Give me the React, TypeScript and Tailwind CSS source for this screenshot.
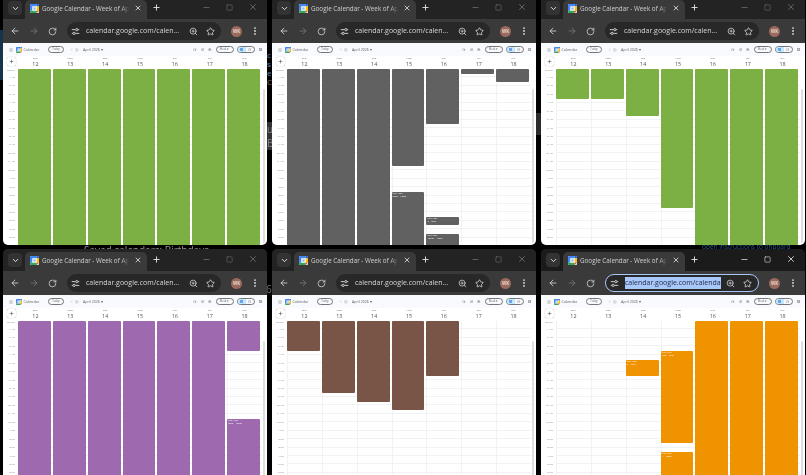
import { ArrowLeft, ArrowRight, ChevronDown, ChevronLeft, ChevronRight, Menu, Minus, MoreVertical, Plus, RotateCw, Search, Settings, Square, Star, X, ZoomIn, CircleHelp, CalendarDays, CheckCircle2, LayoutGrid } from "lucide-react";

type Ev = { col: number; top: number; bottom?: number; label?: string };

const FULL = (cols: number[]): Ev[] => cols.map((col) => ({ col, top: 0 }));

const windows: { color: string; events: Ev[]; active?: boolean }[] = [
  { color: "#7cb044", events: FULL([0, 1, 2, 3, 4, 5, 6]) },
  {
    color: "#616161",
    events: [
      ...FULL([0, 1, 2]),
      { col: 3, top: 0, bottom: 97 },
      { col: 3, top: 123, label: "5pm – 12am" },
      { col: 4, top: 0, bottom: 55 },
      { col: 4, top: 148, bottom: 156, label: "7 – 8pm" },
      { col: 4, top: 165, label: "10pm – 12am" },
      { col: 5, top: 0, bottom: 5 },
      { col: 6, top: 0, bottom: 13 },
    ],
  },
  {
    color: "#7cb044",
    events: [
      { col: 0, top: 0, bottom: 30 },
      { col: 1, top: 0, bottom: 30 },
      { col: 2, top: 0, bottom: 47 },
      { col: 3, top: 0, bottom: 139 },
      ...FULL([4, 5, 6]),
    ],
  },
  {
    color: "#9e69af",
    events: [...FULL([0, 1, 2, 3, 4, 5]), { col: 6, top: 0, bottom: 30 }, { col: 6, top: 98, label: "3pm – 12am" }],
  },
  {
    color: "#795548",
    events: [
      { col: 0, top: 0, bottom: 30 },
      { col: 1, top: 0, bottom: 72 },
      { col: 2, top: 0, bottom: 81 },
      { col: 3, top: 0, bottom: 89 },
      { col: 4, top: 0, bottom: 55 },
    ],
  },
  {
    color: "#f09300",
    active: true,
    events: [
      { col: 2, top: 39, bottom: 55, label: "5 – 7pm" },
      { col: 3, top: 30, bottom: 122, label: "4am – 3pm" },
      { col: 3, top: 131, label: "4 – 12pm" },
      ...FULL([4, 5, 6]),
    ],
  },
];

const days = [
  ["SUN", "12"],
  ["MON", "13"],
  ["TUE", "14"],
  ["WED", "15"],
  ["THU", "16"],
  ["FRI", "17"],
  ["SAT", "18"],
];
const hours = ["1 AM", "2 AM", "3 AM", "4 AM", "5 AM", "6 AM", "7 AM", "8 AM", "9 AM", "10 AM", "11 AM", "12 PM", "1 PM", "2 PM", "3 PM", "4 PM", "5 PM", "6 PM", "7 PM", "8 PM", "9 PM", "10 PM", "11 PM"];

function Favicon({ size }: { size: number }) {
  return (
    <svg width={size} height={size} viewBox="0 0 24 24" className="shrink-0">
      <rect x="0" y="0" width="24" height="24" rx="3" fill="#fff" />
      <path d="M0 3a3 3 0 0 1 3-3h15v6H6v12H0z" fill="#4285f4" />
      <path d="M18 0h3a3 3 0 0 1 3 3v3h-6z" fill="#1967d2" />
      <path d="M18 6h6v12h-6z" fill="#fbbc04" />
      <path d="M6 18h12v6H3a3 3 0 0 1-3-3v-3z" fill="#34a853" />
      <path d="M18 18h6l-6 6z" fill="#ea4335" />
      <rect x="9" y="9" width="6" height="6" fill="#8ab4f8" />
    </svg>
  );
}

function BrowserWindow({ color, events, active }: { color: string; events: Ev[]; active?: boolean }) {
  const ctl = active ? "text-[#e6e6e6]" : "text-[#6f6f6f]";
  return (
    <div className={`flex flex-col overflow-hidden rounded-[5px] ${active ? "bg-[#1c1c1c]" : "bg-[#202020]"}`}>
      {/* tab strip */}
      <div className={`flex h-[22px] shrink-0 items-end pl-[5px] ${active ? "bg-[#1b1b1b]" : "bg-[#232323]"}`}>
        <div className="mb-[4px] flex size-[14px] items-center justify-center rounded-[4px] bg-[#333333] text-[#e8e8e8]">
          <ChevronDown size={9} strokeWidth={2.5} />
        </div>
        <div className="ml-[3px] flex h-[19px] w-[122px] items-center rounded-t-[5px] bg-[#3a3a3a] pb-[3px] pl-[5px] pr-[5px]">
          <Favicon size={9} />
          <span className="relative ml-[3px] w-[87px] overflow-hidden whitespace-nowrap font-['Open_Sans',sans-serif] text-[6.3px] leading-[9px] text-[#d0d0d0]">
            Google Calendar - Week of Apr
            <span className="absolute inset-y-0 right-0 w-[8px] bg-gradient-to-r from-transparent to-[#3a3a3a]" />
          </span>
          <X size={8} strokeWidth={2.5} className="ml-auto text-[#e0e0e0]" />
        </div>
        <Plus size={9} strokeWidth={2.5} className="mb-[7px] ml-[5px] text-[#e0e0e0]" />
        <div className={`mb-[7px] ml-auto flex items-center gap-[15px] pr-[9px] ${ctl}`}>
          <Minus size={9} />
          <Square size={7} />
          <X size={10} />
        </div>
      </div>
      {/* toolbar */}
      <div className="flex h-[24px] shrink-0 items-center bg-[#3a3a3a] pl-[7px]">
        <ArrowLeft size={10} strokeWidth={2} className="text-[#d8d8d8]" />
        <ArrowRight size={10} strokeWidth={2} className="ml-[9px] text-[#777777]" />
        <RotateCw size={9} strokeWidth={2} className="ml-[9px] text-[#d8d8d8]" />
        <div
          className={`ml-[10px] flex h-[18px] w-[154px] items-center rounded-full bg-[#282828] pl-[4px] pr-[6px] ${
            active ? "border border-[#a8c7fa]" : ""
          }`}
        >
          <svg width="9" height="9" viewBox="0 0 12 12" className="shrink-0 text-[#dcdcdc]" fill="none" stroke="currentColor" strokeWidth="1.2">
            <path d="M1 3.5h5M9.5 3.5H11M1 8.5h1.5M6 8.5h5" />
            <circle cx="7.8" cy="3.5" r="1.5" />
            <circle cx="4.2" cy="8.5" r="1.5" />
          </svg>
          {active ? (
            <span className="ml-[6px] w-[96px] overflow-hidden whitespace-nowrap bg-[#a8c7fa] font-['Open_Sans',sans-serif] text-[7px] leading-[12px] text-[#1b2a44]">
              calendar.google.com/calenda
            </span>
          ) : (
            <span className="ml-[6px] w-[95px] overflow-hidden whitespace-nowrap font-['Open_Sans',sans-serif] text-[7px] leading-[12px] text-[#d6d6d6]">
              calendar.google.com/calen...
            </span>
          )}
          <ZoomIn size={9} className="ml-auto text-[#d8d8d8]" />
          <Star size={9} strokeWidth={2} className="ml-[8px] text-[#e6e6e6]" />
        </div>
        <div className="ml-[10px] flex size-[11px] items-center justify-center rounded-full bg-[#9a6a5c] font-['Open_Sans',sans-serif] text-[4.5px] font-semibold text-[#f2e6e0]">
          WK
        </div>
        <MoreVertical size={10} strokeWidth={2.5} className="ml-[8px] text-[#d8d8d8]" />
      </div>
      {/* calendar page */}
      <div className="relative flex min-h-0 flex-1 flex-col bg-white font-['Open_Sans',sans-serif] text-[#5f6368]">
        <div className="flex h-[13px] shrink-0 items-center bg-[#f8fafd] pl-[6px] pr-[5px]">
          <Menu size={4} />
          <span className="ml-[3px]">
            <Favicon size={6} />
          </span>
          <span className="ml-[1.5px] w-[15px] whitespace-nowrap text-[3.8px]">Calendar</span>
          <span className="ml-[9.5px] flex h-[7px] w-[16px] items-center justify-center rounded-full border border-[#747775] text-[2.6px]">
            Today
          </span>
          <ChevronLeft size={3} className="ml-[5.5px]" />
          <span className="ml-[2px] flex size-[4px] items-center justify-center rounded-full bg-[#e3e3e3]">
            <ChevronRight size={3} />
          </span>
          <span className="ml-[4.5px] text-[3.6px]">April 2026 ▾</span>
          <Search size={3.5} className="ml-auto" />
          <CircleHelp size={3.5} className="ml-[4px]" />
          <Settings size={3.5} className="ml-[4px]" />
          <span className="ml-[4px] flex h-[7px] w-[18px] items-center justify-center rounded-full border border-[#747775] text-[2.6px]">
            Week ▾
          </span>
          <span className="ml-[3px] flex h-[7px] w-[18px] overflow-hidden rounded-full border border-[#747775]">
            <span className="flex flex-1 items-center justify-center bg-[#c2e7ff] text-[#0b57d0]">
              <CalendarDays size={3.5} />
            </span>
            <span className="flex flex-1 items-center justify-center">
              <CheckCircle2 size={3.5} />
            </span>
          </span>
          <LayoutGrid size={3.5} className="ml-[4px]" />
        </div>
        <div className="flex h-[13px] shrink-0 pr-[5px]">
          <div className="flex w-[15px] shrink-0 items-start pl-[4px] pt-[1px]">
            <span className="flex size-[9px] items-center justify-center rounded-[2px] bg-white text-[#444] shadow-[0_0_1px_#888]">
              <Plus size={5} strokeWidth={2.5} />
            </span>
          </div>
          {days.map(([d, n]) => (
            <div key={d} className="flex flex-1 flex-col items-center leading-none">
              <span className="mt-[0.5px] text-[2.4px]">{d}</span>
              <span className="mt-[3px] text-[5.4px] text-[#555]">{n}</span>
            </div>
          ))}
        </div>
        <div className="flex min-h-0 flex-1 overflow-hidden pr-[5px]">
          <div className="relative w-[15px] shrink-0 text-right text-[2.5px] leading-none text-[#70757a]">
            <div className="h-[4px] pr-[3px] pt-[1px] text-[2.2px]">GMT-04</div>
            {hours.map((h) => (
              <div key={h} className="flex h-[8.45px] items-center justify-end pr-[3px]">
                {h}
              </div>
            ))}
          </div>
          {days.map(([d], i) => (
            <div key={d} className="relative flex-1 border-l border-[#f1f2f4]">
              <div>
                {hours.concat("12 AM").map((h) => (
                  <div key={h} className="h-[8.45px] border-b border-[#f1f2f4]" />
                ))}
              </div>
              {events
                .filter((e) => e.col === i)
                .map((e) => (
                  <div
                    key={e.top}
                    className="absolute left-[-1px] right-[2px] overflow-hidden rounded-[1px] pl-[1px] text-[2.4px] leading-[3px] text-white"
                    style={{
                      top: e.top,
                      height: e.bottom !== undefined ? e.bottom - e.top : 260,
                      backgroundColor: color,
                    }}
                  >
                    {e.label && (
                      <>
                        <div>Not Avail</div>
                        <div>{e.label}</div>
                      </>
                    )}
                  </div>
                ))}
            </div>
          ))}
        </div>
        <div className="absolute bottom-[2px] right-[2px] top-[46px] w-[2px] rounded-full bg-[#dedede]" />
      </div>
    </div>
  );
}

export default function App() {
  return (
    <div className="relative h-[475px] w-[806px] overflow-hidden bg-black blur-[0.35px]">
      <span className="absolute left-[84px] top-[243px] whitespace-nowrap font-['Open_Sans',sans-serif] text-[10px] text-[#9a9a9a]">
        Saved calendars: Birthdays
      </span>
      <span className="absolute left-[702px] top-[242px] whitespace-nowrap font-['Open_Sans',sans-serif] text-[6.5px] text-[#2f5d8a]">
        open instructions to onboard
      </span>
      <div className="absolute left-[267px] top-[50px] w-[6px] overflow-hidden font-['Open_Sans',sans-serif] text-[8px] leading-[9px] text-[#5c89b5]">
        <div>c</div>
        <div>s</div>
        <div>e</div>
        <div className="text-[#8a6d5c]">C</div>
      </div>
      <div className="absolute left-[267px] top-[122px] w-[6px] overflow-hidden bg-[#333] font-['Open_Sans',sans-serif] text-[10px] leading-[14px] text-[#888]">
        <div>u</div>
        <div>B</div>
      </div>
      <div className="absolute left-[536px] top-[113px] h-[22px] w-[5px] bg-[#2b2b2b]" />
      <div className="absolute left-[266px] top-[282px] w-[6px] overflow-hidden font-['Open_Sans',sans-serif] text-[10px] text-[#777]">6(</div>
      <div className="absolute left-0 top-[30px] h-[50px] w-[3px] bg-[#16324d]" />
      <div className="relative -mt-[3px] grid grid-cols-[264px_264px_264px] grid-rows-[248px_234px] gap-x-[5px] gap-y-[4px] pl-[3px]">
        {windows.map((w, i) => (
          <BrowserWindow key={i} color={w.color} events={w.events} active={w.active} />
        ))}
      </div>
    </div>
  );
}
